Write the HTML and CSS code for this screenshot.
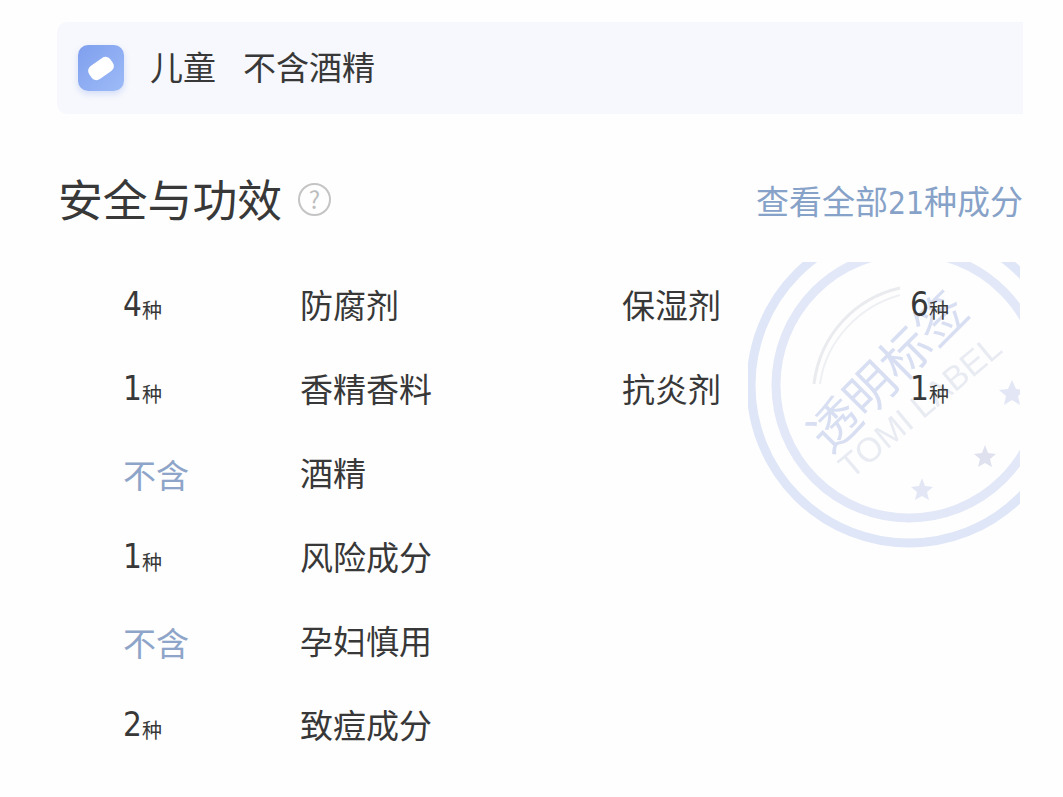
FILE: index.html
```html
<!DOCTYPE html>
<html lang="zh-CN">
<head>
  <meta charset="UTF-8">
  <meta name="viewport" content="width=device-width, initial-scale=1.0">
  <title>安全与功效</title>
  <link rel="stylesheet" href="styles.css">
</head>
<body>
  <div class="container">
    <!-- 适用人群 -->
    <div class="banner">
      <div class="banner-icon">
        <svg width="46" height="46" viewBox="0 0 46 46">
          <rect x="10" y="15.5" width="26" height="16" rx="6" transform="rotate(-35 23 23.5)" fill="#fff"/>
        </svg>
      </div>
      <span class="banner-tag">儿童</span>
      <span class="banner-tag">不含酒精</span>
    </div>

    <div class="section-head">
      <div class="section-title">
        <h2>安全与功效</h2>
        <span class="help">?</span>
      </div>
      <a class="view-all">查看全部<span class="num">21</span>种成分</a>
    </div>

    <div class="section-body">
      <!-- 水印 -->
      <div class="stamp">
        <svg width="272" height="292" viewBox="0 0 272 292">
          <g fill="none">
            <circle cx="161" cy="123" r="158" stroke="#dfe6f7" stroke-width="9"/>
            <circle cx="161" cy="123" r="133" stroke="#e2e8f8" stroke-width="9"/>
            <path d="M66 122 C72 72 108 36 152 26" stroke="#e9ebee" stroke-width="3"/>
            <path d="M72 122 C78 78 112 44 152 33" stroke="#eef0f3" stroke-width="2"/>
          </g>
          <g fill="#e2e6f5">
            <path d="M264 118 l4 9 9 1 -7 6 2 9 -8 -5 -8 5 2 -9 -7 -6 9 -1 Z"/>
            <path d="M237 183 l3 8 8 1 -6 5 2 8 -7 -4 -7 4 2 -8 -6 -5 8 -1 Z" fill="#dfe1ee"/>
            <path d="M174 216 l3 8 8 1 -6 5 2 8 -7 -4 -7 4 2 -8 -6 -5 8 -1 Z"/>
          </g>
          <text class="stamp-cn" transform="translate(82 193) rotate(-45)">透明标签</text>
          <text class="stamp-en" transform="translate(103 218) rotate(-40)">TOMI LABEL</text>
        </svg>
      </div>

      <div class="col-left">
        <div class="row"><span class="count">4<small>种</small></span><span class="name">防腐剂</span></div>
        <div class="row"><span class="count">1<small>种</small></span><span class="name">香精香料</span></div>
        <div class="row"><span class="none">不含</span><span class="name">酒精</span></div>
        <div class="row"><span class="count">1<small>种</small></span><span class="name">风险成分</span></div>
        <div class="row"><span class="none">不含</span><span class="name">孕妇慎用</span></div>
        <div class="row"><span class="count">2<small>种</small></span><span class="name">致痘成分</span></div>
      </div>
      <div class="col-right">
        <div class="row"><span class="name">保湿剂</span><span class="count">6<small>种</small></span></div>
        <div class="row"><span class="name">抗炎剂</span><span class="count">1<small>种</small></span></div>
      </div>
    </div>
  </div>
</body>
</html>
```

FILE: styles.css
```css
* {
  margin: 0;
  padding: 0;
  box-sizing: border-box;
}

html, body {
  height: 100%;
  overflow: hidden;
}

body {
  background: #fefefe;
  color: #383838;
  font-family: "Noto Sans CJK SC", "Noto Sans", sans-serif;
  font-weight: 400;
}

.container {
  width: 966px;
  margin-left: 57px;
  padding-top: 22px;
}

.banner {
  height: 92px;
  background: #f7f8fd;
  border-radius: 10px 0 0 10px;
  display: flex;
  align-items: center;
  padding-left: 21px;
  font-size: 33px;
}

.banner-icon {
  width: 46px;
  height: 46px;
  border-radius: 10px;
  background: linear-gradient(135deg, #7f9fee, #9dbbf7);
  box-shadow: 0 3px 6px rgba(130, 160, 235, 0.3);
  margin-right: 26px;
}

.banner-tag {
  margin-right: 27px;
  padding-bottom: 4px;
}

.section-head {
  display: flex;
  justify-content: space-between;
  align-items: center;
  margin-top: 51px;
  height: 69px;
}

.section-title {
  display: flex;
  align-items: center;
  padding-left: 1px;
}

.section-title h2 {
  font-size: 44.8px;
  font-weight: 400;
  color: #383838;
  padding-bottom: 4px;
}

.help {
  width: 33px;
  height: 33px;
  margin-left: 16px;
  border: 2px solid #c4c4c4;
  border-radius: 50%;
  color: #bdbdbd;
  font-size: 24px;
  line-height: 28px;
  text-align: center;
}

.view-all {
  color: #87a2c8;
  font-size: 33px;
}

.num {
  font-family: "DejaVu Sans", sans-serif;
  font-stretch: condensed;
  font-size: 31.5px;
}

.section-body {
  position: relative;
  display: flex;
  margin-top: 28px;
  padding-left: 66px;
}

.stamp {
  position: absolute;
  left: 691px;
  top: 0;
  width: 272px;
  height: 292px;
  filter: blur(0.7px);
}

.stamp-cn {
  font-size: 50px;
  fill: #d9dff2;
}

.stamp-en {
  font-family: "Liberation Sans", sans-serif;
  font-size: 34px;
  fill: #e8ebf2;
}

.col-left, .col-right {
  position: relative;
  display: flex;
  flex-direction: column;
}

.col-left .count, .none {
  width: 177px;
}

.col-left {
  width: 499px;
}

.col-right .name {
  width: 288px;
}

.row {
  display: flex;
  align-items: center;
  height: 84px;
}

.name {
  font-size: 33px;
  color: #383838;
}

.count {
  font-family: "DejaVu Sans", sans-serif;
  font-stretch: condensed;
  font-size: 33px;
  color: #383838;
  letter-spacing: -1px;
}

.count small {
  font-family: "Noto Sans CJK SC", sans-serif;
  font-size: 20px;
  letter-spacing: 0;
  margin-left: 1px;
  vertical-align: -2px;
}

.none {
  font-size: 33px;
  color: #8ea5c9;
  padding-top: 4px;
}
```
